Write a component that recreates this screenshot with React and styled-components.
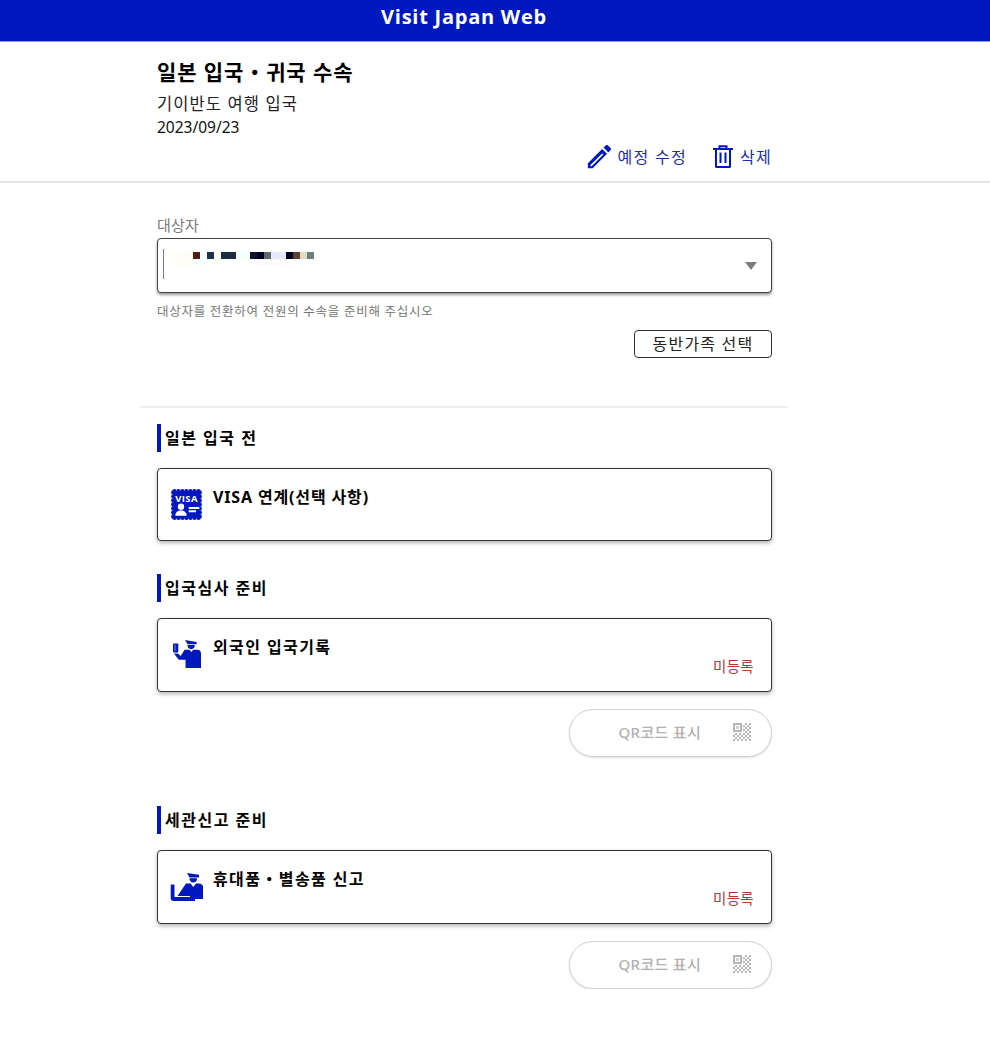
import React from 'react';
import styled, { createGlobalStyle } from 'styled-components';

const BLUE = '#0019be';
const KR = `"Noto Sans", "Noto Sans CJK KR", sans-serif`;

const GlobalStyle = createGlobalStyle`
  html, body {
    margin: 0;
    padding: 0;
    background: #fff;
    color: #000;
    font-family: ${KR};
  }
`;

const TopBar = styled.header`
  height: 41px;
  background: ${BLUE};
  border-bottom: 1px solid #8e9bdc;
`;

const TopBarInner = styled.div`
  width: 648px;
  margin-left: 140px;
  text-align: center;
  font-family: "Open Sans", sans-serif;
  font-size: 20px;
  font-weight: 700;
  line-height: 34px;
  letter-spacing: 0.75px;
  color: #fff;
`;

const TripSection = styled.section`
  height: 139px;
  border-bottom: 2px solid #e6e6e6;
`;

const Column = styled.div`
  width: 615px;
  margin-left: 157px;
`;

const TripTitle = styled.h1`
  margin: 0;
  padding-top: 14px;
  font-size: 21px;
  font-weight: 700;
  line-height: 32px;
  letter-spacing: 0.9px;
`;

const TripName = styled.div`
  margin-top: 4px;
  font-size: 16.5px;
  line-height: 24px;
  letter-spacing: 1.1px;
  color: #222;
`;

const TripDate = styled.div`
  font-size: 15.5px;
  line-height: 22px;
  color: #111;
`;

const Actions = styled.div`
  display: flex;
  justify-content: flex-end;
  align-items: center;
  gap: 26px;
  margin-top: 3px;
`;

const ActionLink = styled.a`
  display: flex;
  align-items: center;
  gap: ${p => p.$gap}px;
  font-size: 16px;
  line-height: 26px;
  letter-spacing: 1.3px;
  color: #1c309f;
`;

const TargetSection = styled.section`
  height: 225px;
  width: 648px;
  margin-left: 140px;
  box-sizing: border-box;
  padding: 32px 16px 0 17px;
  border-bottom: 2px solid #eeeeee;
`;

const FieldLabel = styled.div`
  font-size: 15px;
  line-height: 20px;
  letter-spacing: 0.2px;
  color: #7a7a7a;
`;

const SelectBox = styled.div`
  position: relative;
  display: flex;
  align-items: center;
  justify-content: space-between;
  box-sizing: border-box;
  height: 55px;
  margin-top: 3px;
  padding: 0 14px 0 5px;
  border: 1px solid #444;
  border-radius: 4px;
  background: #fff;
  box-shadow: 0 2px 3px rgba(0, 0, 0, 0.4);
`;

const Caret = styled.span`
  align-self: flex-start;
  margin-top: 10px;
  height: 30px;
  border-left: 1px solid #777;
`;

const Mosaic = styled.div`
  position: absolute;
  top: 13px;
  left: 14px;
  display: grid;
  grid-auto-rows: 7px;
`;

const MosaicRow = styled.div`
  display: flex;
`;

const MosaicCell = styled.span`
  width: ${p => p.$w}px;
  background: ${p => p.$c};
`;

const SelectArrow = styled.span`
  width: 0;
  height: 0;
  border-left: 6px solid transparent;
  border-right: 6px solid transparent;
  border-top: 8px solid #7d7d7d;
`;

const Hint = styled.div`
  margin-top: 10px;
  font-size: 12.5px;
  line-height: 18px;
  letter-spacing: 0.72px;
  color: #757575;
`;

const ButtonRow = styled.div`
  display: flex;
  justify-content: flex-end;
  margin-top: 9px;
`;

const FamilyButton = styled.button`
  box-sizing: border-box;
  width: 138px;
  height: 28px;
  padding: 0;
  border: 1px solid #333;
  border-radius: 4px;
  background: #fff;
  font-family: ${KR};
  font-size: 16px;
  line-height: 24px;
  letter-spacing: 1.2px;
  color: #222;
`;

const Group = styled.section`
  width: 615px;
  margin-left: 157px;
  padding-top: ${p => p.$top}px;
`;

const GroupHeading = styled.h2`
  box-sizing: border-box;
  height: 28px;
  margin: 0;
  padding-left: 4px;
  border-left: 4px solid ${BLUE};
  font-size: 16px;
  font-weight: 700;
  line-height: 28px;
  letter-spacing: 1.5px;
`;

const Card = styled.div`
  position: relative;
  box-sizing: border-box;
  display: flex;
  height: ${p => p.$h}px;
  margin-top: 16px;
  padding: 14px 12px 0 12px;
  border: 1px solid #333;
  border-radius: 4px;
  background: #fff;
  box-shadow: 0 2px 4px rgba(0, 0, 0, 0.3);
`;

const CardIcon = styled.div`
  flex: none;
  width: 36px;
  height: 36px;
  box-sizing: border-box;
  padding-top: ${p => p.$top}px;
  padding-left: ${p => p.$left}px;
  margin-right: 7px;
`;

const CardTitle = styled.div`
  font-size: 16px;
  font-weight: 700;
  line-height: 28px;
  letter-spacing: ${p => p.$spacing || 1.4}px;
`;

const Status = styled.div`
  position: absolute;
  right: 17px;
  bottom: 15px;
  font-size: 14.5px;
  line-height: 20px;
  letter-spacing: 0.3px;
  color: #a53e36;
`;

const QrRow = styled.div`
  display: flex;
  justify-content: flex-end;
  margin-top: 17px;
`;

const QrButton = styled.button`
  display: flex;
  align-items: center;
  justify-content: flex-end;
  box-sizing: border-box;
  width: 203px;
  height: 48px;
  padding: 0 20px 2px 0;
  border: 1px solid #d2d2d2;
  border-radius: 24px;
  background: #fff;
  box-shadow: 0 1px 2px rgba(0, 0, 0, 0.12);
  font-family: ${KR};
  font-size: 15px;
  font-weight: 500;
  letter-spacing: 0.3px;
  color: #b0b0b0;
`;

const QrLabel = styled.span`
  margin: 0 32px 1px 0;
`;

const MOSAIC_TOP = [
  [21, '#fffef6'], [7, '#4a2010'], [7, '#f8fdfd'], [7, '#1e3048'], [7, '#fffdf6'],
  [15, '#1e2c40'], [14, '#f4ffff'], [7, '#10142a'], [7, '#000020'], [7, '#606868'],
  [15, '#e4eafc'], [7, '#000020'], [7, '#5c4030'], [7, '#e4dcc0'], [7, '#688080'],
];

const MOSAIC_BOTTOM = [
  [21, '#fffef6'], [14, '#f8ffff'], [14, '#fffffb'], [21, '#fcffff'], [14, '#fffdfd'],
  [21, '#fdfaff'], [14, '#fffcfa'], [14, '#ffffff'],
];

const PencilIcon = () => (
  <svg width="31" height="31" viewBox="0 0 24 24" fill={BLUE}>
    <path d="M3 17.25V21h3.75L17.81 9.94l-3.75-3.75L3 17.25zm2.92 2.33H5v-.92l9.06-9.06.92.92L5.92 19.58zM20.71 7.04a.996.996 0 0 0 0-1.41l-2.34-2.34c-.2-.2-.45-.29-.71-.29s-.51.1-.7.29l-1.83 1.83 3.75 3.75 1.83-1.83z" />
  </svg>
);

const TrashIcon = () => (
  <svg width="20" height="23" viewBox="0 0 20 23" fill="none" stroke={BLUE} strokeWidth="2">
    <path d="M0 4h20M6.500 4V1.200h7V4M3 4v17.500c0 .3.200.5.500.5h13c.3 0 .5-.2.500-.5V4M7.500 7.500v10.500M12.500 7.500v10.500" />
  </svg>
);

const VisaIcon = () => {
  const bumps = [];
  for (let i = 0; i < 7; i++) {
    const p = 3.5 + i * 4;
    bumps.push(<circle key={`t${i}`} cx={p} cy="2.300" r="2.200" />);
    bumps.push(<circle key={`b${i}`} cx={p} cy="28.700" r="2.200" />);
    bumps.push(<circle key={`l${i}`} cx="2.300" cy={p} r="2.200" />);
    bumps.push(<circle key={`r${i}`} cx="28.700" cy={p} r="2.200" />);
  }
  return (
    <svg width="31" height="31" viewBox="0 0 31 31" fill={BLUE}>
      {bumps}
      <rect x="2.300" y="2.300" width="26.400" height="26.400" />
      <text x="15.500" y="12.800" textAnchor="middle" fill="#fff" fontFamily="Open Sans, sans-serif" fontWeight="700" fontSize="9.500" letterSpacing="0.4">VISA</text>
      <circle cx="10" cy="17.700" r="3.200" fill="#fff" />
      <path d="M4.300 26.700c0-3.200 2.200-5.200 5.700-5.200s5.700 2 5.700 5.200z" fill="#fff" />
      <path d="M17.700 18h10.600v2H17.700zM17.700 21.300H25v2h-7.300z" fill="#fff" />
    </svg>
  );
};

const OfficerIcon = () => (
  <svg width="28" height="28" viewBox="0 0 29 29" fill={BLUE}>
    <path d="M12.500 0l12 2v2.500h-9.500z" />
    <path d="M15 5.200h7.500c.2 2.500-1.300 4.300-3.700 4.300S14.900 7.700 15 5.200z" />
    <path d="M0 4.500c0-.6.400-1 1-1h3.500c.6 0 1 .4 1 1V12c0 .6-.4 1-1 1H1c-.6 0-1-.4-1-1z" />
    <path d="M1.700 5h.8v6.500h-.8z" fill="#fff" opacity="0.6" />
    <path d="M1 14h4l3 2.500L12 10h5l2 2.500L21 10h5c2 .4 3 2 3 4v15H13v-8.500H6z" />
  </svg>
);

const CustomsIcon = () => (
  <svg width="33" height="29" viewBox="0 0 33 29" fill={BLUE}>
    <path d="M17 0l12 1.800v2.700h-9.500z" />
    <path d="M19.500 5.200h7.500c.2 2.500-1.300 4.300-3.700 4.300s-3.900-1.800-3.800-4.300z" />
    <path d="M16 10.500h4.500l2.800 3.500 2.700-3.500h3.500c2.500.5 4 2.500 4 5V26H20v-3H7.500z" />
    <path d="M.7 12.500c0-.6.400-1 1-1h1.800c.6 0 1 .4 1 1V24H25v4H3.700c-1.800 0-3-1.200-3-3z" />
  </svg>
);

const QrIcon = () => {
  const cells = [];
  for (let y = 0; y < 9; y++) {
    for (let x = 0; x < 9; x++) {
      if (!(x < 5 && y < 5) && (x + y) % 2 === 0) {
        cells.push(<rect key={`${x}-${y}`} x={x * 2} y={y * 2} width="2" height="2" />);
      }
    }
  }
  return (
    <svg width="18" height="18" viewBox="0 0 18 18" fill="#b6b6b6" shapeRendering="crispEdges">
      <path d="M0 0h9v9H0z M2 2v5h5V2z" fillRule="evenodd" />
      <rect x="3" y="3" width="3" height="3" fill="#d0d0d0" />
      {cells}
    </svg>
  );
};

const QrAction = () => (
  <QrRow>
    <QrButton type="button" disabled>
      <QrLabel>QR코드 표시</QrLabel>
      <QrIcon />
    </QrButton>
  </QrRow>
);

export default function App() {
  return (
    <>
      <GlobalStyle />
      <TopBar>
        <TopBarInner>Visit Japan Web</TopBarInner>
      </TopBar>
      <TripSection>
        <Column>
          <TripTitle>일본 입국・귀국 수속</TripTitle>
          <TripName>기이반도 여행 입국</TripName>
          <TripDate>2023/09/23</TripDate>
          <Actions>
            <ActionLink $gap={2}>
              <PencilIcon />
              예정 수정
            </ActionLink>
            <ActionLink $gap={7}>
              <TrashIcon />
              삭제
            </ActionLink>
          </Actions>
        </Column>
      </TripSection>
      <TargetSection>
        <FieldLabel>대상자</FieldLabel>
        <SelectBox>
          <Caret />
          <Mosaic>
            <MosaicRow>
              {MOSAIC_TOP.map(([w, c], i) => (
                <MosaicCell key={i} $w={w} $c={c} />
              ))}
            </MosaicRow>
            <MosaicRow>
              {MOSAIC_BOTTOM.map(([w, c], i) => (
                <MosaicCell key={i} $w={w} $c={c} />
              ))}
            </MosaicRow>
          </Mosaic>
          <SelectArrow />
        </SelectBox>
        <Hint>대상자를 전환하여 전원의 수속을 준비해 주십시오</Hint>
        <ButtonRow>
          <FamilyButton type="button">동반가족 선택</FamilyButton>
        </ButtonRow>
      </TargetSection>
      <Group $top={16}>
        <GroupHeading>일본 입국 전</GroupHeading>
        <Card $h={73}>
          <CardIcon $top={6} $left={1}>
            <VisaIcon />
          </CardIcon>
          <CardTitle $spacing={0.85}>VISA 연계(선택 사항)</CardTitle>
        </Card>
      </Group>
      <Group $top={33}>
        <GroupHeading>입국심사 준비</GroupHeading>
        <Card $h={74}>
          <CardIcon $top={7} $left={3}>
            <OfficerIcon />
          </CardIcon>
          <CardTitle>외국인 입국기록</CardTitle>
          <Status>미등록</Status>
        </Card>
        <QrAction />
      </Group>
      <Group $top={49}>
        <GroupHeading>세관신고 준비</GroupHeading>
        <Card $h={74}>
          <CardIcon $top={8} $left={0}>
            <CustomsIcon />
          </CardIcon>
          <CardTitle>휴대품・별송품 신고</CardTitle>
          <Status>미등록</Status>
        </Card>
        <QrAction />
      </Group>
    </>
  );
}
